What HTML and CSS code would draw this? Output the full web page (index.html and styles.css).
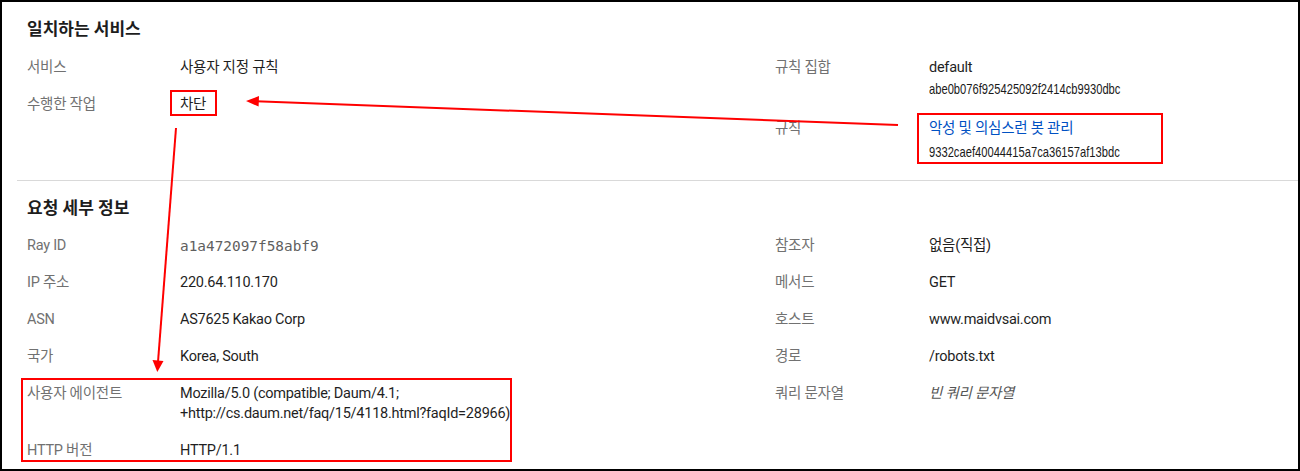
FILE: index.html
```html
<!DOCTYPE html>
<html lang="ko">

<head>
    <meta charset="UTF-8">
    <meta name="viewport" content="width=device-width, initial-scale=1.0">
    <title>이벤트 세부 정보</title>
    <link rel="stylesheet" href="styles.css">
</head>

<body>
    <div class="frame">
        <section class="section first">
            <h2 class="section-title">일치하는 서비스</h2>
            <div class="columns">
                <div class="col left">
                    <div class="row"><span class="label">서비스</span><span class="value">사용자 지정 규칙</span></div>
                    <div class="row"><span class="label">수행한 작업</span><span class="value">차단</span></div>
                </div>
                <div class="col right">
                    <div class="row">
                        <span class="label">규칙 집합</span>
                        <span class="value">default<span class="hash">abe0b076f925425092f2414cb9930dbc</span></span>
                    </div>
                    <div class="row tall">
                        <span class="label">규칙</span>
                        <span class="value"><a class="link" href="#">악성 및 의심스런 봇 관리</a><span class="hash">9332caef40044415a7ca36157af13bdc</span></span>
                    </div>
                </div>
            </div>
        </section>

        <section class="section second">
            <h2 class="section-title">요청 세부 정보</h2>
            <div class="columns">
                <div class="col left">
                    <div class="row"><span class="label">Ray ID</span><span class="value mono">a1a472097f58abf9</span></div>
                    <div class="row"><span class="label">IP 주소</span><span class="value">220.64.110.170</span></div>
                    <div class="row"><span class="label">ASN</span><span class="value">AS7625 Kakao Corp</span></div>
                    <div class="row"><span class="label">국가</span><span class="value">Korea, South</span></div>
                    <div class="row"><span class="label">사용자 에이전트</span><span class="value">Mozilla/5.0 (compatible; Daum/4.1;<br>+http://cs.daum.net/faq/15/4118.html?faqId=28966)</span></div>
                    <div class="row"><span class="label">HTTP 버전</span><span class="value">HTTP/1.1</span></div>
                </div>
                <div class="col right">
                    <div class="row"><span class="label">참조자</span><span class="value">없음(직접)</span></div>
                    <div class="row"><span class="label">메서드</span><span class="value">GET</span></div>
                    <div class="row"><span class="label">호스트</span><span class="value">www.maidvsai.com</span></div>
                    <div class="row"><span class="label">경로</span><span class="value">/robots.txt</span></div>
                    <div class="row"><span class="label">쿼리 문자열</span><span class="value empty">빈 쿼리 문자열</span></div>
                </div>
            </div>
        </section>

        <!-- red annotations drawn over the page -->
        <svg class="marks" width="1300" height="471" viewBox="0 0 1300 471">
            <g fill="none" stroke="#ff0000" stroke-width="2">
                <rect x="171" y="91" width="45" height="24" />
                <rect x="918" y="114" width="244" height="49" />
                <rect x="22" y="379" width="489" height="82" />
                <line x1="898" y1="125" x2="256" y2="101.3" />
                <line x1="176" y1="128" x2="158" y2="362" />
            </g>
            <g fill="#ff0000">
                <polygon points="246,101 259,96 258.6,106.6" />
                <polygon points="157.3,372 152.5,360 163.5,361" />
            </g>
        </svg>
    </div>
</body>

</html>
```

FILE: styles.css
```css
/* Base */
body {
    margin: 0;
    background: #fff;
    font-family: Roboto, "Noto Sans CJK KR", sans-serif;
    font-size: 14.5px;
    letter-spacing: -0.25px;
    color: #1f1f1f;
}

.frame {
    position: relative;
    width: 1300px;
    height: 471px;
    box-sizing: border-box;
    border: 2px solid #000;
    overflow: hidden;
}

/* Sections */
.section {
    margin-left: 15px;
    padding: 15px 0 0 10px;
}

.section.first {
    padding-bottom: 17px;
    border-bottom: 1px solid #d9d9d9;
}

.section-title {
    margin: 0 0 17px;
    font-size: 17px;
    line-height: 24px;
    font-weight: 700;
    letter-spacing: 0;
    color: #1d1d1d;
}

.section.second .section-title {
    margin-bottom: 16px;
}

.columns {
    display: grid;
    grid-template-columns: 748px 1fr;
}

.col {
    display: flex;
    flex-direction: column;
    gap: 17px;
}

.row {
    display: grid;
    grid-template-columns: 153px 1fr;
    line-height: 20px;
}

.col.right .row {
    grid-template-columns: 154px 1fr;
}

.label {
    color: #717171;
}

.value {
    display: flex;
    flex-direction: column;
    align-items: flex-start;
    color: #1f1f1f;
}

.row.tall .label {
    line-height: 24px;
}

/* rule ids are set in a narrow face */
.hash {
    display: block;
    font-family: "Liberation Sans", sans-serif;
    font-size: 15px;
    letter-spacing: 0;
    line-height: 22px;
    color: #1a1a1a;
    transform: scaleX(0.745);
    transform-origin: left center;
}

.link {
    line-height: 24px;
    color: #0051c3;
    text-decoration: none;
}

.mono {
    font-family: "DejaVu Sans Mono", monospace;
    font-size: 14.4px;
    letter-spacing: 0;
    color: #5f5f5f;
}

.empty {
    font-style: italic;
    color: #555;
}

/* Annotation layer */
.marks {
    position: absolute;
    top: -2px;
    left: -2px;
    pointer-events: none;
}
```
